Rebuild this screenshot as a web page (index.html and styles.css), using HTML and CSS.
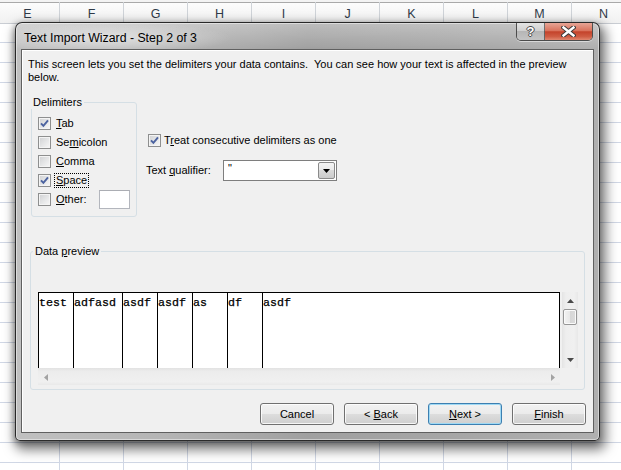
FILE: index.html
```html
<!DOCTYPE html>
<html>
<head>
<meta charset="utf-8">
<title>Text Import Wizard</title>
<link rel="stylesheet" href="styles.css">
</head>
<body>
<div class="sheet">
  <div class="colheads">
    <div class="ch first">E</div>
    <div class="ch">F</div>
    <div class="ch">G</div>
    <div class="ch">H</div>
    <div class="ch">I</div>
    <div class="ch">J</div>
    <div class="ch">K</div>
    <div class="ch">L</div>
    <div class="ch">M</div>
    <div class="ch">N</div>
  </div>
  <div class="grid"></div>
</div>

<div class="dialog">
  <div class="titlebar">
    <div class="title">Text Import Wizard - Step 2 of 3</div>
    <div class="capbtns">
      <div class="cap help">?</div>
      <div class="cap close">
        <svg width="15" height="11" viewBox="0 0 15 11"><path d="M2.5 1.5L12.5 9.5M12.5 1.5L2.5 9.5" stroke="#3a3a3a" stroke-width="4.4" stroke-linecap="square" fill="none"/><path d="M2.5 1.5L12.5 9.5M12.5 1.5L2.5 9.5" stroke="#ffffff" stroke-width="2.4" stroke-linecap="square" fill="none"/></svg>
      </div>
    </div>
  </div>

  <div class="client">
    <p class="desc">This screen lets you set the delimiters your data contains.&nbsp; You can see how your text is affected in the preview<br>below.</p>

    <div class="opts">
      <fieldset class="group delims">
        <legend>Delimiters</legend>
        <div class="cbs">
          <div class="cb"><span class="box"><svg width="9" height="9" viewBox="0 0 9 9"><path d="M1 4.3L3.4 6.9L8 1.3" fill="none" stroke="#4c63a0" stroke-width="1.9"/></svg></span><span class="lbl"><u>T</u>ab</span></div>
          <div class="cb"><span class="box"></span><span class="lbl">Se<u>m</u>icolon</span></div>
          <div class="cb"><span class="box"></span><span class="lbl"><u>C</u>omma</span></div>
          <div class="cb"><span class="box"><svg width="9" height="9" viewBox="0 0 9 9"><path d="M1 4.3L3.4 6.9L8 1.3" fill="none" stroke="#4c63a0" stroke-width="1.9"/></svg></span><span class="lbl focus"><u>S</u>pace</span></div>
          <div class="cb other"><span class="box"></span><span class="lbl"><u>O</u>ther:</span><span class="otherbox"></span></div>
        </div>
      </fieldset>

      <div class="right">
        <div class="cb treat"><span class="box"><svg width="9" height="9" viewBox="0 0 9 9"><path d="M1 4.3L3.4 6.9L8 1.3" fill="none" stroke="#4c63a0" stroke-width="1.9"/></svg></span><span class="lbl tlbl">T<u>r</u>eat consecutive delimiters as one</span></div>
        <div class="qual">
          <span class="qlabel">Text <u>q</u>ualifier:</span>
          <div class="combo">
            <span class="val">"</span>
            <span class="drop"><svg width="7" height="4" viewBox="0 0 7 4"><path d="M0 0H7L3.5 4Z" fill="#000"/></svg></span>
          </div>
        </div>
      </div>
    </div>

    <fieldset class="group pgroup">
      <legend>Data <u>p</u>review</legend>
      <div class="pv">
        <div class="pvbox">
          <div class="cell" style="width:35px">test</div>
          <div class="cell" style="width:49px">adfasd</div>
          <div class="cell" style="width:35px">asdf</div>
          <div class="cell" style="width:35px">asdf</div>
          <div class="cell" style="width:35px">as</div>
          <div class="cell" style="width:35px">df</div>
          <div class="cell last">asdf</div>
        </div>
        <div class="vscroll">
          <span class="arr"><svg width="7" height="4" viewBox="0 0 7 4"><path d="M3.5 0L7 4H0Z" fill="#4a4a4a"/></svg></span>
          <span class="thumb"></span>
          <span class="arr down"><svg width="7" height="4" viewBox="0 0 7 4"><path d="M0 0H7L3.5 4Z" fill="#4a4a4a"/></svg></span>
        </div>
        <div class="hscroll">
          <span class="arr"><svg width="4" height="7" viewBox="0 0 4 7"><path d="M0 3.5L4 0V7Z" fill="#a3a3a3"/></svg></span>
          <span class="arr"><svg width="4" height="7" viewBox="0 0 4 7"><path d="M4 3.5L0 0V7Z" fill="#a3a3a3"/></svg></span>
        </div>
      </div>
    </fieldset>

    <div class="buttons">
      <div class="btn">Cancel</div>
      <div class="btn">&lt; <u>B</u>ack</div>
      <div class="btn default"><u>N</u>ext &gt;</div>
      <div class="btn"><u>F</u>inish</div>
    </div>
  </div>
</div>
</body>
</html>
```

FILE: styles.css
```css
* { box-sizing: border-box; }

html, body {
  margin: 0;
  padding: 0;
}

body {
  width: 621px;
  height: 470px;
  overflow: hidden;
  position: relative;
  background: #ffffff;
  font-family: "Segoe UI", "Liberation Sans", Arial, sans-serif;
  color: #000;
}

/* ---------- spreadsheet background ---------- */
.colheads {
  display: flex;
  height: 24px;
  border-top: 2px solid #f3f3f3;
  background: linear-gradient(#a9a9a9 0 1px, #fcfcfc 1px, #f1f1f1 100%);
  border-bottom: 1px solid #c9cdd3;
  overflow: hidden;
}

.ch {
  flex: 0 0 64px;
  border-right: 1px solid #cfd3d8;
  text-align: center;
  font-family: "Liberation Sans", Arial, sans-serif;
  font-size: 12.5px;
  line-height: 20px;
  padding-top: 2px;
  color: #2f3a48;
}

.ch.first { margin-left: -4px; }

.grid {
  height: 446px;
  background-image:
    linear-gradient(#d0d7e5 1px, transparent 1px),
    linear-gradient(90deg, #d0d7e5 1px, transparent 1px);
  background-size: 100% 20px, 64px 100%;
  background-position: 0 18px, 59px 0;
}

/* ---------- dialog window ---------- */
.dialog {
  position: absolute;
  left: 15px;
  top: 22px;
  width: 585px;
  height: 419px;
  border: 1px solid rgba(25, 25, 25, 0.9);
  border-radius: 7px 7px 5px 5px;
  padding: 0 5px 7px 5px;
  display: flex;
  flex-direction: column;
  background:
    radial-gradient(ellipse 120px 16px at 95px 15px, rgba(255,255,255,0.5), rgba(255,255,255,0) 100%),
    linear-gradient(rgba(255,255,255,0.3), rgba(255,255,255,0) 26px),
    linear-gradient(90deg, #c0c0c0 0%, #b5b5b5 25%, #a0a0a0 50%, #a6a6a6 75%, #b0b0b0 100%);
  box-shadow:
    inset 0 0 0 1px rgba(255,255,255,0.45),
    3px 6px 12px 3px rgba(0,0,0,0.5),
    -1px 2px 6px rgba(0,0,0,0.3);
}

.titlebar {
  height: 26px;
  display: flex;
  justify-content: space-between;
  align-items: flex-start;
  margin: 0 1px 0 3px;
}

.title {
  padding-top: 7px;
  line-height: 16px;
  font-size: 12.3px;
  color: #000;
}

.capbtns {
  display: flex;
  height: 18px;
  border: 1px solid rgba(40, 40, 40, 0.75);
  border-top: 0;
  border-radius: 0 0 5px 5px;
  overflow: hidden;
  box-shadow: 0 1px 0 rgba(255,255,255,0.5);
}

.cap {
  display: flex;
  align-items: center;
  justify-content: center;
  height: 17px;
}

.help {
  width: 28px;
  border-right: 1px solid rgba(40, 40, 40, 0.6);
  background: linear-gradient(#e4e4e4 0%, #d0d0d0 45%, #b6b6b6 50%, #c4c4c4 100%);
  color: #fff;
  font-weight: bold;
  font-size: 13px;
  font-family: "Liberation Sans", Arial, sans-serif;
  text-shadow: 1px 0 0 #4a4a4a, -1px 0 0 #4a4a4a, 0 1px 0 #4a4a4a, 0 -1px 0 #4a4a4a;
}

.close {
  width: 47px;
  background: linear-gradient(#e7a596 0%, #d9735d 45%, #c4432b 52%, #cf5d44 80%, #e0876f 100%);
}

.client {
  height: 384px;
  border: 1px solid #606060;
  background: #f0f0f0;
  box-shadow: inset 1px 1px 0 #ffffff;
  display: flex;
  flex-direction: column;
  font-size: 11px;
}

.desc {
  margin: 8px 0 0 6px;
  line-height: 13px;
  font-size: 11px;
}

u { text-decoration: underline; text-underline-offset: 1px; }

.opts {
  display: flex;
  align-items: flex-start;
  margin-top: 12px;
}

.group {
  margin: 0;
  border: 1px solid #d5dfe5;
  border-radius: 3px;
  padding: 0;
  min-width: 0;
}

.group legend {
  padding: 0 2px;
  line-height: 13px;
  font-size: 11px;
}

.delims {
  margin-left: 9px;
  width: 106px;
  height: 121px;
  padding-top: 5px;
}

.delims legend { margin-left: -1px; }

.cbs {
  padding: 0 6px 0 6px;
}

.cb {
  display: flex;
  align-items: center;
  height: 19px;
}

.box {
  flex: 0 0 13px;
  width: 13px;
  height: 13px;
  border: 1px solid #8e8f8f;
  background: linear-gradient(135deg, #cfd0d2 0%, #e4e5e6 50%, #f8f8f8 100%);
  box-shadow: inset 0 0 0 1px #f4f4f4;
  display: flex;
  align-items: center;
  justify-content: center;
}

.lbl {
  margin-left: 3px;
  line-height: 13px;
  padding: 0 1px;
  border: 1px solid transparent;
}

.lbl.focus { border: 1px dotted #000; }

.otherbox {
  margin-left: auto;
  width: 31px;
  height: 19px;
  background: #fff;
  border: 1px solid #b3b6bd;
  border-top-color: #abadb3;
}

.right {
  margin-left: 9px;
}

.treat {
  margin-top: 35px;
  padding-left: 2px;
}

.tlbl { margin-left: 1px; }

.qual {
  display: flex;
  align-items: center;
  margin-top: 10px;
  height: 21px;
}

.qlabel {
  width: 77px;
  line-height: 13px;
}

.combo {
  width: 114px;
  height: 21px;
  background: #fff;
  border: 1px solid #7e7e7e;
  display: flex;
  justify-content: space-between;
  padding: 1px;
}

.val {
  padding-left: 3px;
  line-height: 13px;
  font-size: 11px;
  color: #000;
}

.drop {
  width: 17px;
  height: 17px;
  border: 1px solid #8a8a8a;
  border-radius: 2px;
  background: linear-gradient(#f4f4f4 0%, #e9e9e9 50%, #d9d9d9 50%, #cbcbcb 100%);
  display: flex;
  align-items: center;
  justify-content: center;
}

/* ---------- data preview ---------- */
.pgroup {
  margin: 28px 0 0 8px;
  width: 555px;
  height: 145px;
  padding: 34px 6px 0 7px;
}

.pgroup legend { margin-left: -5px; }

.pv {
  display: grid;
  grid-template-columns: 522px 16px;
  grid-template-rows: 76px 17px;
  column-gap: 2px;
}

.pvbox {
  display: flex;
  background: #fff;
  border-top: 1px solid #000;
  border-left: 1px solid #000;
  border-right: 1px solid #000;
}

.cell {
  flex: 0 0 auto;
  border-right: 1px solid #000;
  font-family: "Liberation Mono", "Courier New", monospace;
  font-size: 11.67px;
  line-height: 14px;
  padding-top: 3px;
  white-space: pre;
  overflow: hidden;
  color: #000;
  -webkit-text-stroke: 0.25px #000;
}

.cell.last {
  flex: 1 1 auto;
  border-right: 0;
}

.vscroll {
  background: linear-gradient(90deg, #e4e4e4 0%, #eeeeee 25%, #f0f0f0 75%, #e8e8e8 100%);
  display: flex;
  flex-direction: column;
  align-items: center;
}

.vscroll .arr {
  height: 17px;
  display: flex;
  align-items: center;
  justify-content: center;
}

.vscroll .arr.down { margin-top: auto; }

.thumb {
  width: 14px;
  height: 16px;
  border: 1px solid #979797;
  border-radius: 2px;
  background: linear-gradient(90deg, #f3f3f3 0%, #e8e8e8 50%, #d6d6d6 50%, #dcdcdc 100%);
  box-shadow: inset 0 0 0 1px #fafafa;
}

.hscroll {
  grid-column: 1;
  background: linear-gradient(#e2e2e2 0%, #ececec 20%, #f0f0f0 80%, #e9e9e9 100%);
  display: flex;
  justify-content: space-between;
  align-items: center;
  padding: 0 5px 0 6px;
}

/* ---------- buttons ---------- */
.buttons {
  display: flex;
  justify-content: flex-end;
  gap: 10px;
  margin-top: 13px;
  padding-right: 7px;
}

.btn {
  width: 74px;
  height: 22px;
  border: 1px solid #707070;
  border-radius: 3px;
  background: linear-gradient(#f2f2f2 0%, #ebebeb 50%, #dddddd 50%, #cfcfcf 100%);
  box-shadow: inset 0 0 0 1px rgba(255,255,255,0.8);
  text-align: center;
  font-size: 11px;
  line-height: 20px;
}

.btn.default {
  border-color: #3c7fb1;
  box-shadow: inset 0 0 0 1px #9fd9f4;
}
```
